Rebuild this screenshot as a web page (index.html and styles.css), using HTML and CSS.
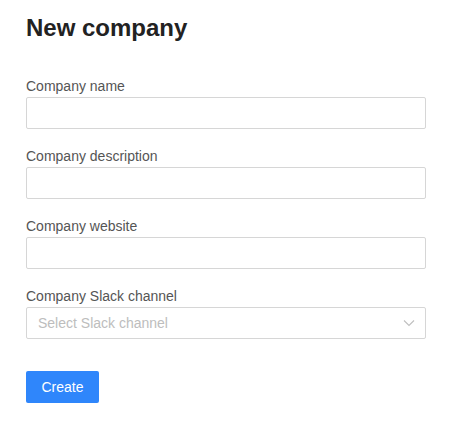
FILE: index.html
```html
<!DOCTYPE html>
<html>
<head>
<meta charset="utf-8">
<link rel="stylesheet" href="styles.css">
</head>
<body>
<div class="page">
  <h1 class="title">New company</h1>
  <form class="form">
    <div class="field">
      <label class="label">Company name</label>
      <div class="input"></div>
    </div>
    <div class="field">
      <label class="label">Company description</label>
      <div class="input"></div>
    </div>
    <div class="field">
      <label class="label">Company website</label>
      <div class="input"></div>
    </div>
    <div class="field">
      <label class="label">Company Slack channel</label>
      <div class="input select">
        <span class="placeholder">Select Slack channel</span>
        <svg class="chevron" width="12" height="8" viewBox="0 0 12 8"><path d="M1 1.5 L6 6.5 L11 1.5" fill="none" stroke="#bfbfbf" stroke-width="1.1"/></svg>
      </div>
    </div>
    <div class="actions">
      <button type="button" class="btn">Create</button>
    </div>
  </form>
</div>
</body>
</html>
```
FILE: styles.css
```css
* { box-sizing: border-box; }
html, body { margin: 0; padding: 0; background: #fff; }
body { font-family: "Liberation Sans", Arial, sans-serif; color: #222; }
.page { padding: 14px 26px 0 26px; width: 452px; }
.title { margin: 0; font-size: 24px; line-height: 28px; font-weight: bold; color: #222; }
.form { margin-top: 33px; display: flex; flex-direction: column; gap: 16px; }
.field { display: flex; flex-direction: column; }
.label { font-size: 14px; line-height: 22px; color: #555; }
.input { height: 32px; width: 400px; border: 1px solid #d6d6d6; border-radius: 2px; background: #fff; }
.select { display: flex; align-items: center; justify-content: space-between; padding: 0 11px; }
.placeholder { font-size: 14px; color: #bdbdbd; }
.chevron { display: block; margin-right: -1px; }
.actions { margin-top: 16px; }
.btn { height: 32px; width: 73px; border: none; border-radius: 2px; background: #2f86fb; color: #fff; font-family: "Liberation Sans", Arial, sans-serif; font-size: 14px; padding: 0; }
```
